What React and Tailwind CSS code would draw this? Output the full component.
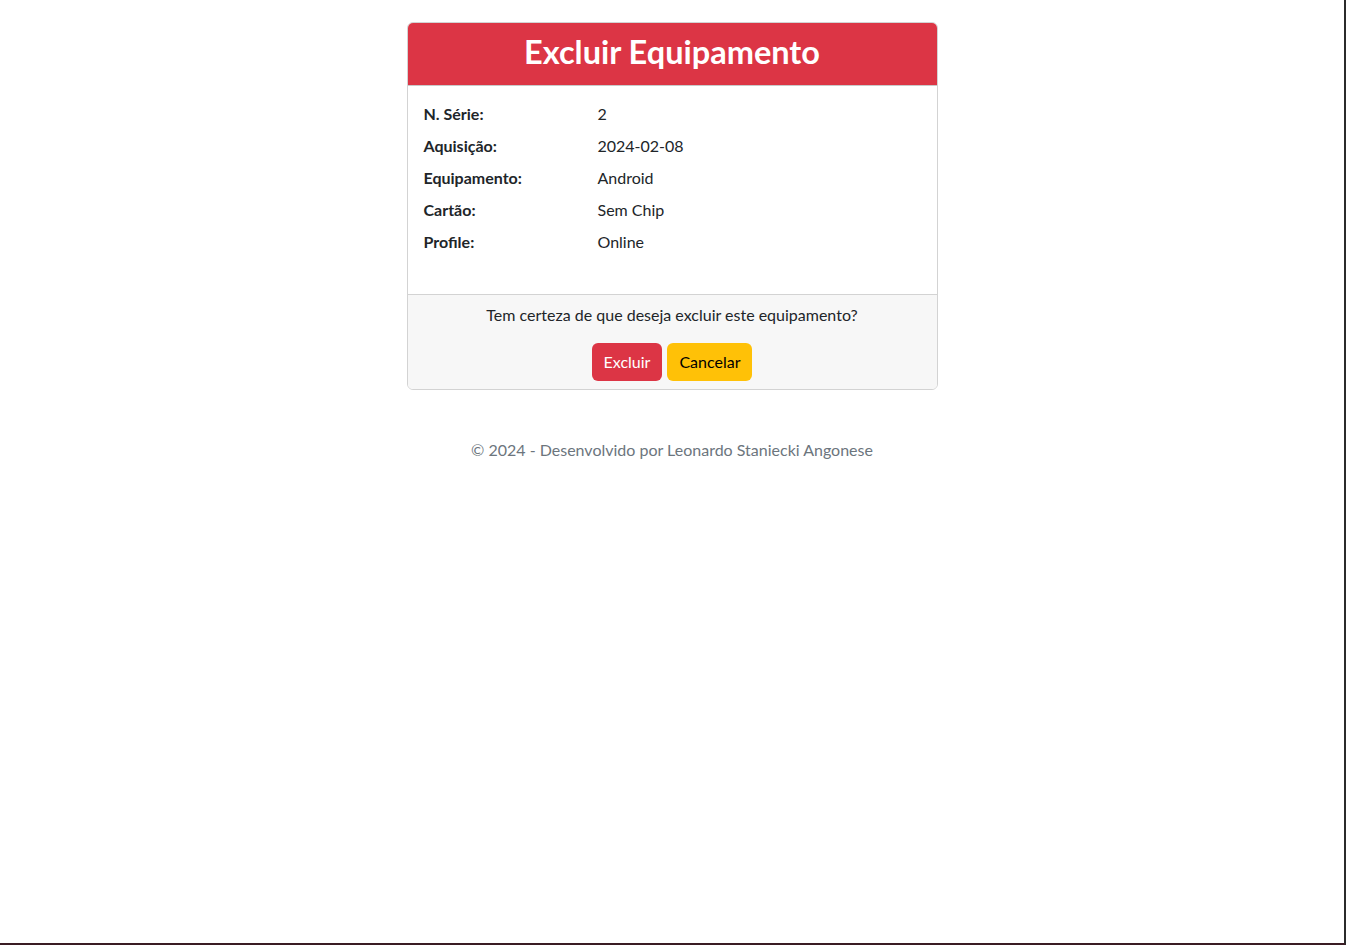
const DETAILS = [
  { label: 'N. Série:', value: '2' },
  { label: 'Aquisição:', value: '2024-02-08' },
  { label: 'Equipamento:', value: 'Android' },
  { label: 'Cartão:', value: 'Sem Chip' },
  { label: 'Profile:', value: 'Online' },
]

export default function App() {
  return (
    <div
      className="h-[945px] w-full bg-white text-[#212529] border-r-2 border-b-2 border-r-[#2b2b2b] border-b-[#3a1c24]"
      style={{ fontFamily: 'Lato, "Noto Sans", sans-serif' }}
    >
      <div className="flex flex-col items-center pt-[22px]">
        {/* Card */}
        <div className="w-[531px] rounded-md border border-[#d3d3d3] overflow-hidden">
          <div className="bg-[#dc3545] px-4 pt-[10px] pb-[14px] border-b border-[#c9c9c9] text-center">
            <h2 className="text-[32.5px] leading-[38px] font-bold text-white">Excluir Equipamento</h2>
          </div>

          <div className="bg-white p-4">
            <dl className="flex flex-col mb-4 text-base leading-6">
              {DETAILS.map(d => (
                <div key={d.label} className="flex mb-2">
                  <dt className="w-[174px] font-bold">{d.label}</dt>
                  <dd>{d.value}</dd>
                </div>
              ))}
            </dl>
          </div>

          <div className="bg-[#f7f7f7] border-t border-[#d3d3d3] px-4 py-2 text-center">
            <p className="mb-4 leading-6">Tem certeza de que deseja excluir este equipamento?</p>
            <div className="flex justify-center gap-[5px]">
              <button className="h-[38px] px-3 rounded-md bg-[#dc3545] text-white">Excluir</button>
              <button className="h-[38px] px-3 rounded-md bg-[#ffc107] text-black">Cancelar</button>
            </div>
          </div>
        </div>

        {/* Footer */}
        <p className="mt-[48px] leading-6 text-[#6c757d]">© 2024 - Desenvolvido por Leonardo Staniecki Angonese</p>
      </div>
    </div>
  )
}
